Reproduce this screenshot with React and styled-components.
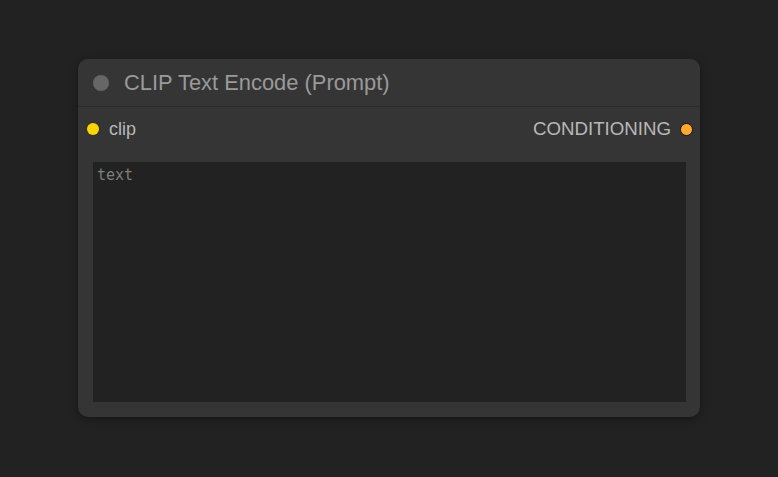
import React from "react";
import styled, { createGlobalStyle } from "styled-components";

const Global = createGlobalStyle`
  html, body { margin: 0; padding: 0; background: #222222; }
  body { font-family: "Liberation Sans", Arial, sans-serif; }
  #root { width: 778px; height: 477px; }
`;

const Canvas = styled.div`
  width: 778px;
  height: 477px;
  box-sizing: border-box;
  padding: 59px 0 0 78px;
  background: #222222;
`;

const Node = styled.div`
  width: 622px;
  height: 358px;
  background: #353535;
  border-radius: 10px;
  box-shadow: 0 2px 8px rgba(0, 0, 0, 0.35);
  display: flex;
  flex-direction: column;
  overflow: hidden;
`;

const TitleBar = styled.div`
  height: 48px;
  box-sizing: border-box;
  display: flex;
  align-items: center;
  padding-left: 15px;
  gap: 15px;
  border-bottom: 1px solid #2b2b2b;
  background: #353535;
`;

const Dot = styled.span`
  width: ${(p) => p.size}px;
  height: ${(p) => p.size}px;
  border-radius: 50%;
  background: ${(p) => p.color};
  box-sizing: border-box;
  border: ${(p) => (p.ring ? "1.5px solid #1a1206" : "none")};
  flex: none;
`;

const Title = styled.span`
  color: #9a9a9a;
  font-size: 21.9px;
  line-height: 1;
`;

const SlotRow = styled.div`
  height: 44px;
  display: flex;
  align-items: center;
  justify-content: space-between;
  padding: 0 7px 0 9px;
  box-sizing: border-box;
`;

const Slot = styled.div`
  display: flex;
  align-items: center;
  gap: ${(p) => (p.right ? 9 : 10)}px;
  color: #b8b8b8;
  font-size: ${(p) => (p.right ? 18.7 : 18)}px;
`;

const Body = styled.div`
  flex: 1;
  display: flex;
  padding: 11px 14px 15px 15px;
`;

const TextArea = styled.div`
  flex: 1;
  background: #222222;
  color: #7e7e7e;
  font-family: "DejaVu Sans Mono", "Liberation Mono", monospace;
  font-size: 15px;
  padding: 4px 4px;
`;

export default function App() {
  return (
    <>
      <Global />
      <Canvas>
        <Node>
          <TitleBar>
            <Dot size={16} color="#666666" />
            <Title>CLIP Text Encode (Prompt)</Title>
          </TitleBar>
          <SlotRow>
            <Slot>
              <Dot size={12} color="#FFD500" />
              clip
            </Slot>
            <Slot right>
              CONDITIONING
              <Dot size={13} color="#FFA931" ring />
            </Slot>
          </SlotRow>
          <Body>
            <TextArea>text</TextArea>
          </Body>
        </Node>
      </Canvas>
    </>
  );
}
